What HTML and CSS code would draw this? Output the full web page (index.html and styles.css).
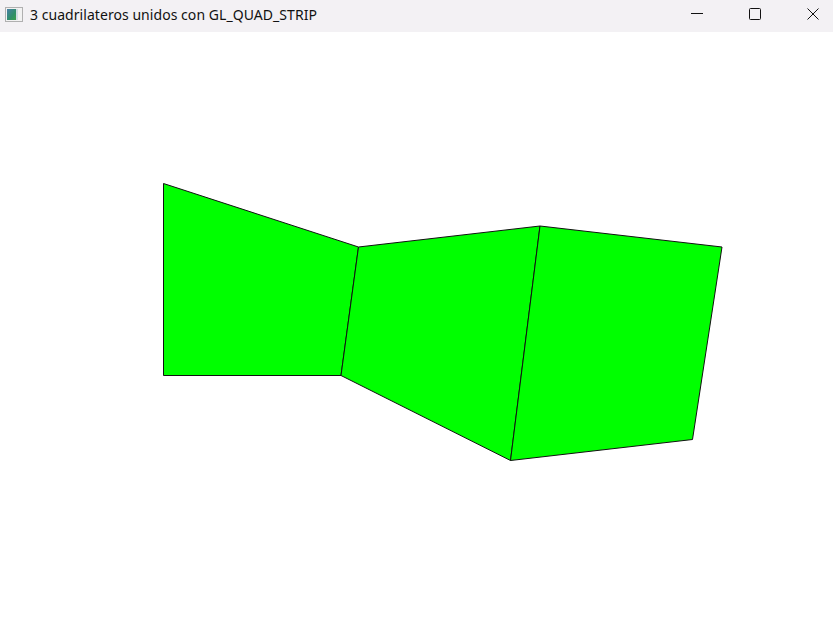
FILE: index.html
```html
<!DOCTYPE html>
<html lang="es">
<head>
<meta charset="utf-8">
<title>3 cuadrilateros unidos con GL_QUAD_STRIP</title>
<link rel="stylesheet" href="styles.css">
</head>
<body>
<div class="window">
  <div class="titlebar">
    <div class="app">
      <svg class="app-icon" width="18" height="15" viewBox="0 0 18 15">
        <defs>
          <linearGradient id="g" x1="0" y1="0" x2="1" y2="1">
            <stop offset="0" stop-color="#4a7fa8"/>
            <stop offset="0.6" stop-color="#2e8f6a"/>
            <stop offset="1" stop-color="#3aa04a"/>
          </linearGradient>
        </defs>
        <rect x="0.5" y="0.5" width="17" height="14" fill="#f2f2f2" stroke="#b0b0b0"/>
        <rect x="2" y="2" width="9" height="11" fill="url(#g)"/>
        <rect x="11" y="2" width="2" height="11" fill="#cfdce2"/>
      </svg>
      <span class="title">3 cuadrilateros unidos con GL_QUAD_STRIP</span>
    </div>
    <div class="controls">
      <div class="ctl">
        <svg width="12" height="12" viewBox="0 0 12 12"><path d="M0 5.5H12" stroke="#111" stroke-width="1"/></svg>
      </div>
      <div class="ctl">
        <svg width="12" height="12" viewBox="0 0 12 12"><rect x="0.5" y="0.5" width="11" height="11" rx="1" fill="none" stroke="#111" stroke-width="1"/></svg>
      </div>
      <div class="ctl">
        <svg width="12" height="12" viewBox="0 0 12 12"><path d="M0.5 0.5L11.5 11.5M11.5 0.5L0.5 11.5" stroke="#111" stroke-width="1"/></svg>
      </div>
    </div>
  </div>
  <div class="canvas">
    <svg class="scene" width="833" height="593" viewBox="0 32 833 593">
      <g fill="#00ff00" stroke="#111" stroke-width="1" stroke-linejoin="round">
        <polygon points="163.5,183.5 358.5,247 341,375.5 163.5,375.5"/>
        <polygon points="358.5,247 540,226 510.5,460.5 341,375.5"/>
        <polygon points="540,226 722,247 692.5,439.5 510.5,460.5"/>
      </g>
    </svg>
  </div>
</div>
</body>
</html>
```
FILE: styles.css
```css
html, body {
  margin: 0;
  padding: 0;
  background: #ffffff;
}
.window {
  width: 833px;
  height: 625px;
  display: flex;
  flex-direction: column;
  overflow: hidden;
}
.titlebar {
  height: 32px;
  flex: none;
  background: #f3f1f4;
  display: flex;
  align-items: center;
  justify-content: space-between;
}
.app {
  display: flex;
  align-items: center;
  padding-left: 5px;
  gap: 7px;
}
.app-icon {
  display: block;
  margin-top: -4px;
}
.title {
  font-family: "Noto Sans", "Open Sans", sans-serif;
  font-size: 14px;
  letter-spacing: 0.05px;
  color: #111;
  margin-top: -4px;
}
.controls {
  display: flex;
  align-self: stretch;
}
.ctl {
  width: 58px;
  box-sizing: border-box;
  display: flex;
  align-items: center;
  justify-content: flex-start;
  padding-left: 21px;
  padding-bottom: 5px;
}
.ctl:last-child {
  width: 47px;
}
.ctl svg { display: block; }
.canvas {
  flex: 1;
  background: #ffffff;
}
.scene { display: block; }
```
